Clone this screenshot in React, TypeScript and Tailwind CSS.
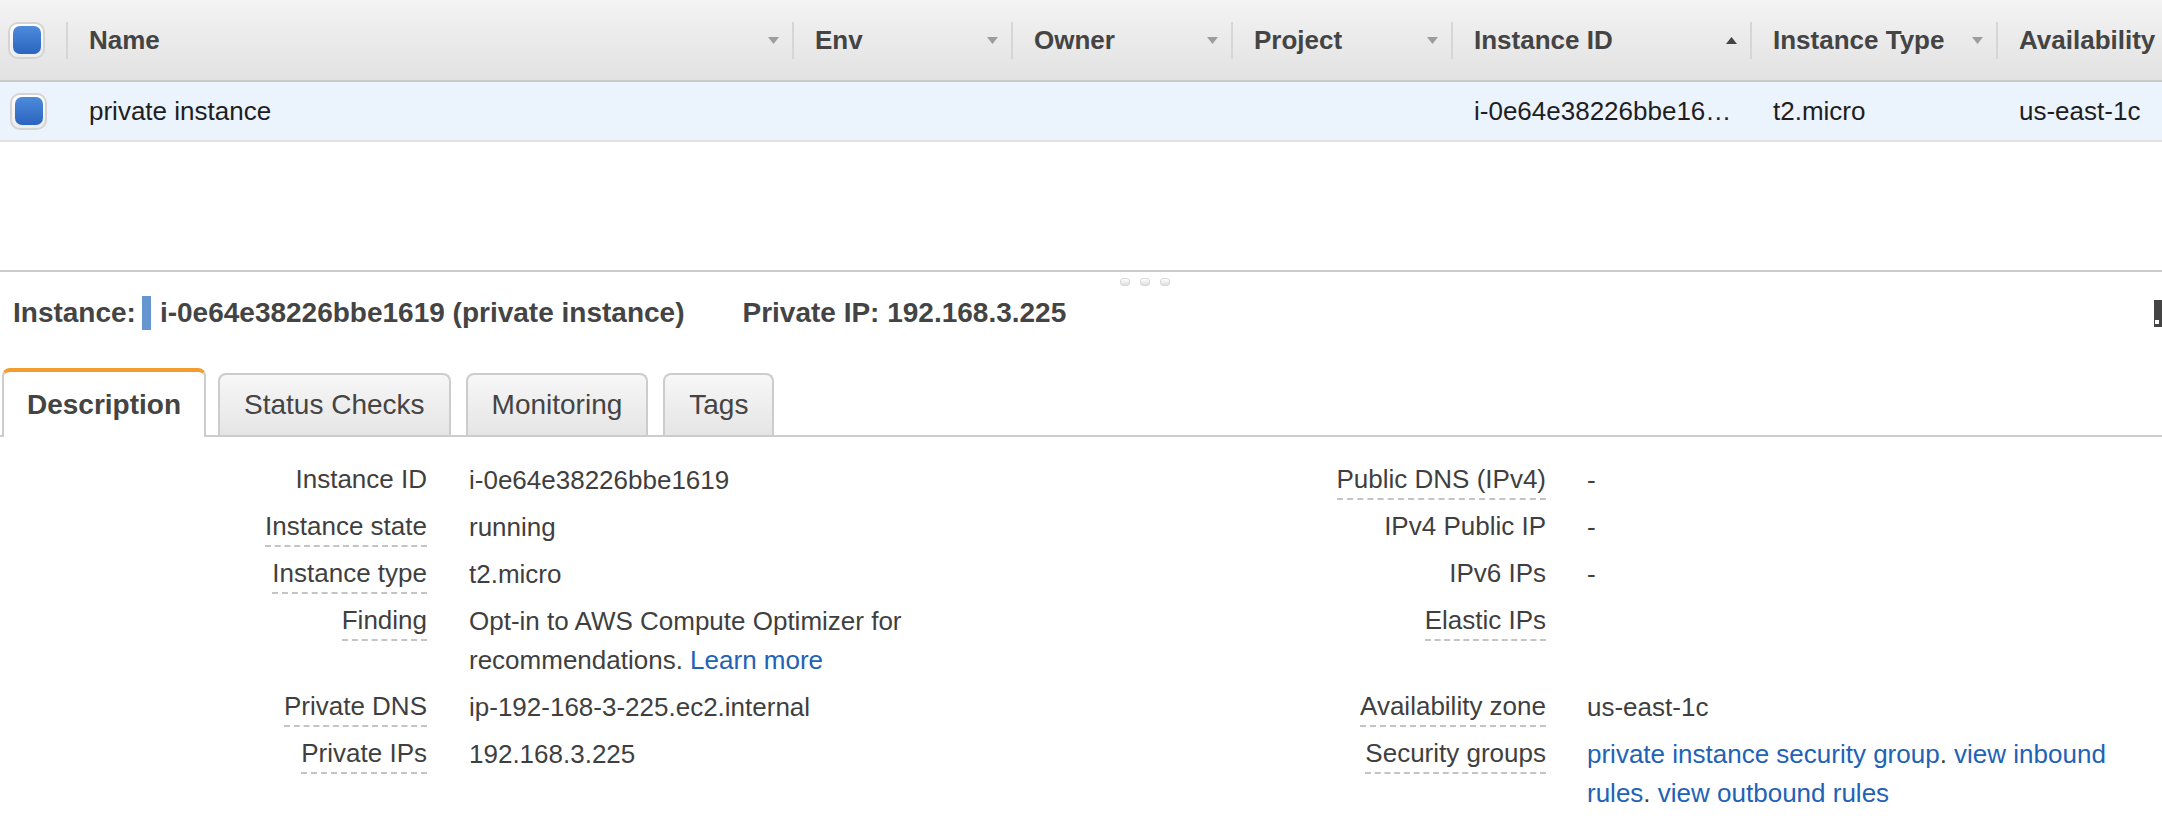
import React from 'react';

type Col = { label: string; head: string; cell: string; sort?: 'up' | 'down' | null };

const columns: Col[] = [
  { label: 'Name', head: 'w-[724px]', cell: 'w-[726px]', sort: 'down' },
  { label: 'Env', head: 'w-[217px]', cell: 'w-[219px]', sort: 'down' },
  { label: 'Owner', head: 'w-[218px]', cell: 'w-[220px]', sort: 'down' },
  { label: 'Project', head: 'w-[218px]', cell: 'w-[220px]', sort: 'down' },
  { label: 'Instance ID', head: 'w-[297px]', cell: 'w-[299px]', sort: 'up' },
  { label: 'Instance Type', head: 'w-[244px]', cell: 'w-[246px]', sort: 'down' },
  { label: 'Availability', head: 'flex-1 min-w-0', cell: 'flex-1 min-w-0', sort: null },
];

const rowValues = ['private instance', '', '', '', 'i-0e64e38226bbe16…', 't2.micro', 'us-east-1c'];

const Checkbox = () => (
  <span className="flex h-[37px] w-[37px] items-center justify-center rounded-[10px] border-2 border-[#d4d4d4] bg-linear-to-b from-white to-[#ececec]">
    <span className="h-[28px] w-[28px] rounded-[7px] bg-linear-to-b from-[#4d8bdb] to-[#2b64bf]" />
  </span>
);

const Sep = () => <span className="h-[37px] w-[2px] shrink-0 bg-[#d6d6d6]" />;

const SortIcon = ({ dir }: { dir: 'up' | 'down' }) => (
  <svg width="11" height="7" viewBox="0 0 11 7" className="ml-auto shrink-0">
    {dir === 'down' ? (
      <polygon points="0,0 11,0 5.5,7" fill="#9d9d9d" />
    ) : (
      <polygon points="0,7 11,7 5.5,0" fill="#444" />
    )}
  </svg>
);

const Link = ({ children }: { children: React.ReactNode }) => (
  <a href="#" className="text-[#2262b6]">
    {children}
  </a>
);

type DetailRow = {
  l1: string;
  u1: boolean;
  v1: React.ReactNode;
  l2: string;
  u2: boolean;
  v2: React.ReactNode;
};

const details: DetailRow[] = [
  { l1: 'Instance ID', u1: false, v1: 'i-0e64e38226bbe1619', l2: 'Public DNS (IPv4)', u2: true, v2: '-' },
  { l1: 'Instance state', u1: true, v1: 'running', l2: 'IPv4 Public IP', u2: false, v2: '-' },
  { l1: 'Instance type', u1: true, v1: 't2.micro', l2: 'IPv6 IPs', u2: false, v2: '-' },
  {
    l1: 'Finding',
    u1: true,
    v1: (
      <span className="block max-w-[470px]">
        Opt-in to AWS Compute Optimizer for recommendations. <Link>Learn more</Link>
      </span>
    ),
    l2: 'Elastic IPs',
    u2: true,
    v2: '',
  },
  { l1: 'Private DNS', u1: true, v1: 'ip-192-168-3-225.ec2.internal', l2: 'Availability zone', u2: true, v2: 'us-east-1c' },
  {
    l1: 'Private IPs',
    u1: true,
    v1: '192.168.3.225',
    l2: 'Security groups',
    u2: true,
    v2: (
      <span>
        <Link>private instance security group</Link>. <Link>view inbound rules</Link>.{' '}
        <Link>view outbound rules</Link>
      </span>
    ),
  },
];

const Label = ({ text, dashed }: { text: string; dashed: boolean }) => (
  <span
    className={
      dashed
        ? 'inline-block align-top border-b-2 border-dashed border-[#c4c4c4] leading-[37px]'
        : 'inline-block align-top leading-[37px]'
    }
  >
    {text}
  </span>
);

const tabs = [
  { label: 'Status Checks', gap: 'ml-[12px]' },
  { label: 'Monitoring', gap: 'ml-[15px]' },
  { label: 'Tags', gap: 'ml-[15px]' },
];

export default function App() {
  return (
    <div className="min-h-screen w-full overflow-hidden bg-white font-['Liberation_Sans',Helvetica,Arial,sans-serif] text-[#444]">
      {/* instance list */}
      <div className="flex h-[82px] items-center border-b-2 border-[#c9c9c9] bg-linear-to-b from-[#f3f3f3] to-[#e2e2e2] text-[26px] font-bold">
        <div className="flex w-[66px] shrink-0 pl-2">
          <Checkbox />
        </div>
        {columns.map((c) => (
          <React.Fragment key={c.label}>
            <Sep />
            <div className={`flex shrink-0 items-center overflow-hidden whitespace-nowrap pl-[21px] pr-[13px] ${c.head}`}>
              <span>{c.label}</span>
              {c.sort && <SortIcon dir={c.sort} />}
            </div>
          </React.Fragment>
        ))}
      </div>
      <div className="flex h-[60px] items-center border-b-2 border-[#e2e2e2] bg-[#ebf3fd] text-[26px] text-[#1e1e1e]">
        <div className="flex w-[68px] shrink-0 pl-[10px]">
          <Checkbox />
        </div>
        {columns.map((c, i) => (
          <div key={c.label} className={`shrink-0 overflow-hidden whitespace-nowrap pl-[21px] ${c.cell}`}>
            {rowValues[i]}
          </div>
        ))}
      </div>
      <div className="h-[128px]" />

      {/* detail pane */}
      <div className="relative border-t-2 border-[#cccccc]">
        <div className="absolute left-[1120px] top-[6px] flex gap-[10px]">
          <span className="h-[8px] w-[10px] rounded-[3px] border border-[#d8d8d8] bg-linear-to-b from-white to-[#dedede]" />
          <span className="h-[8px] w-[10px] rounded-[3px] border border-[#d8d8d8] bg-linear-to-b from-white to-[#dedede]" />
          <span className="h-[8px] w-[10px] rounded-[3px] border border-[#d8d8d8] bg-linear-to-b from-white to-[#dedede]" />
        </div>

        <div className="mt-[21px] flex h-10 items-center pl-[13px] text-[28px] font-bold">
          <span>Instance:</span>
          <span className="ml-[6px] h-[34px] w-[9px] bg-[#6596d0]" />
          <span className="ml-[9px]">i-0e64e38226bbe1619 (private instance)</span>
          <span className="ml-[58px]">Private IP: 192.168.3.225</span>
          <span className="relative ml-auto h-[27px] w-[8px] bg-[#444]">
            <span className="absolute bottom-[3px] left-[1px] h-[4px] w-[4px] bg-white" />
          </span>
        </div>

        <div className="mt-[35px] flex h-[69px] items-end border-b-2 border-[#cccccc] pl-[2px] text-[28px]">
          <div className="-mb-[2px] flex h-[69px] items-center rounded-t-[8px] border-x-2 border-t-4 border-x-[#cccccc] border-t-[#f59c2e] bg-white px-[23px] font-bold">
            Description
          </div>
          {tabs.map((t) => (
            <div
              key={t.label}
              className={`flex h-[62px] items-center rounded-t-[8px] border-2 border-b-0 border-[#cccccc] bg-linear-to-b from-[#f7f7f7] to-[#e5e5e5] px-[24px] ${t.gap}`}
            >
              {t.label}
            </div>
          ))}
        </div>

        <div className="mt-[20px] grid grid-cols-[447px_853px_266px_1fr] text-[26px] leading-[39px] text-[#3f3f3f]">
          {details.map((r) => (
            <React.Fragment key={r.l1}>
              <div className="py-1 pr-5 text-right">
                <Label text={r.l1} dashed={r.u1} />
              </div>
              <div className="py-1 pl-[22px]">{r.v1}</div>
              <div className="py-1 pr-5 text-right">
                <Label text={r.l2} dashed={r.u2} />
              </div>
              <div className="py-1 pl-[21px] pr-4">{r.v2}</div>
            </React.Fragment>
          ))}
        </div>
      </div>
    </div>
  );
}
